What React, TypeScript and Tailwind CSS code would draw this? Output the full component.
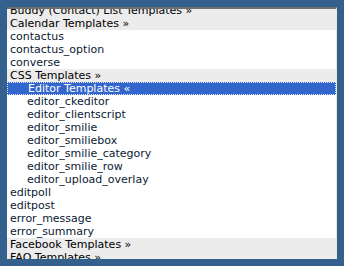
import React from "react";

type Row = { label: string; kind: "group" | "item" | "child" | "open" };

const rows: Row[] = [
  { label: "Buddy (Contact) List Templates »", kind: "group" },
  { label: "Calendar Templates »", kind: "group" },
  { label: "contactus", kind: "item" },
  { label: "contactus_option", kind: "item" },
  { label: "converse", kind: "item" },
  { label: "CSS Templates »", kind: "group" },
  { label: "Editor Templates «", kind: "open" },
  { label: "editor_ckeditor", kind: "child" },
  { label: "editor_clientscript", kind: "child" },
  { label: "editor_smilie", kind: "child" },
  { label: "editor_smiliebox", kind: "child" },
  { label: "editor_smilie_category", kind: "child" },
  { label: "editor_smilie_row", kind: "child" },
  { label: "editor_upload_overlay", kind: "child" },
  { label: "editpoll", kind: "item" },
  { label: "editpost", kind: "item" },
  { label: "error_message", kind: "item" },
  { label: "error_summary", kind: "item" },
  { label: "Facebook Templates »", kind: "group" },
  { label: "FAQ Templates »", kind: "group" },
];

function TemplateRow({ row }: { row: Row }) {
  if (row.kind === "open") {
    return (
      <div className="h-[13px] leading-[11px] bg-[#3366cc] text-white pl-[20px] border border-dotted border-[#dfe8ff] whitespace-nowrap">
        {row.label}
      </div>
    );
  }
  if (row.kind === "group") {
    return (
      <div className="h-[13px] leading-[13px] bg-[#ececec] text-black pl-[3px] whitespace-nowrap">
        {row.label}
      </div>
    );
  }
  return (
    <div
      className={
        "h-[13px] leading-[13px] text-[#0a1a33] whitespace-nowrap " +
        (row.kind === "child" ? "pl-[20px]" : "pl-[3px]")
      }
    >
      {row.label}
    </div>
  );
}

export default function App() {
  return (
    <div className="w-[344px] h-[266px] bg-[#34608e] pt-[7px] pl-[7px] overflow-hidden">
      <div className="w-[330px] h-[252px] bg-white border-t-2 border-t-[#6f6f6f] border-r border-r-[#ece9d8] overflow-hidden font-['DejaVu_Sans',sans-serif] text-[11px]">
        <div className="-mt-[5px]">
          {rows.map((r) => (
            <TemplateRow key={r.label} row={r} />
          ))}
        </div>
      </div>
    </div>
  );
}
